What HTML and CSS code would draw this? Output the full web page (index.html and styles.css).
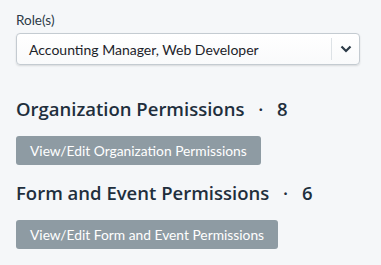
FILE: index.html
```html
<!DOCTYPE html>
<html lang="en">
<head>
  <meta charset="UTF-8" />
  <title>Role Permissions</title>
  <link rel="stylesheet" href="styles.css">
</head>
<body>

  <div class="panel">
    <label class="field-label" for="roles">Role(s)</label>
    <div class="select-box" id="roles">
      <span class="select-value">Accounting Manager, Web Developer</span>
      <span class="select-toggle">
        <svg width="12" height="8" viewBox="0 0 12 8"><path d="M1.5 1.5 L6 6 L10.5 1.5" fill="none" stroke="#2b3a47" stroke-width="2.2"/></svg>
      </span>
    </div>

    <div class="perm-section">
      <h2 class="perm-title">Organization Permissions <span class="dot">·</span> 8</h2>
      <button class="perm-btn">View/Edit Organization Permissions</button>
    </div>

    <div class="perm-section">
      <h2 class="perm-title">Form and Event Permissions <span class="dot">·</span> 6</h2>
      <button class="perm-btn">View/Edit Form and Event Permissions</button>
    </div>
  </div>

</body>
</html>
```

FILE: styles.css
```css
body {
  margin: 0;
  background: #f5f7f9;
  font-family: Lato, 'Open Sans', sans-serif;
  color: #1f2f3d;
}

.panel {
  padding: 12px 21px 0 16px;
}

.field-label {
  display: block;
  font-size: 13.5px;
  line-height: 17px;
  color: #2c3a47;
  margin-bottom: 4px;
}

.select-box {
  display: flex;
  align-items: center;
  height: 30px;
  background: linear-gradient(#fff, #f9fafb);
  border: 1px solid #c4cbd1;
  border-radius: 4px;
  box-shadow: 0 1px 2px rgba(0, 0, 0, 0.12);
}

.select-value {
  flex: 1;
  padding-left: 12px;
  font-size: 14px;
  color: #1c232a;
}

.select-toggle {
  display: flex;
  align-items: center;
  justify-content: center;
  width: 27px;
  height: 22px;
  border-left: 1px solid #dde2e6;
}

.perm-section {
  margin-top: 33px;
}

.perm-section + .perm-section {
  margin-top: 17px;
}

.perm-title {
  margin: 0 0 16px;
  font-family: 'Open Sans', Lato, sans-serif;
  font-size: 18.5px;
  line-height: 22px;
  font-weight: 600;
  color: #1f2f3d;
}

.dot {
  margin: 0 9px;
}

.perm-btn {
  display: block;
  height: 29px;
  padding: 0 14px;
  border: none;
  border-radius: 3px;
  background: #8e9ba3;
  color: #fff;
  font-family: Lato, 'Open Sans', sans-serif;
  font-size: 13.8px;
}
```
